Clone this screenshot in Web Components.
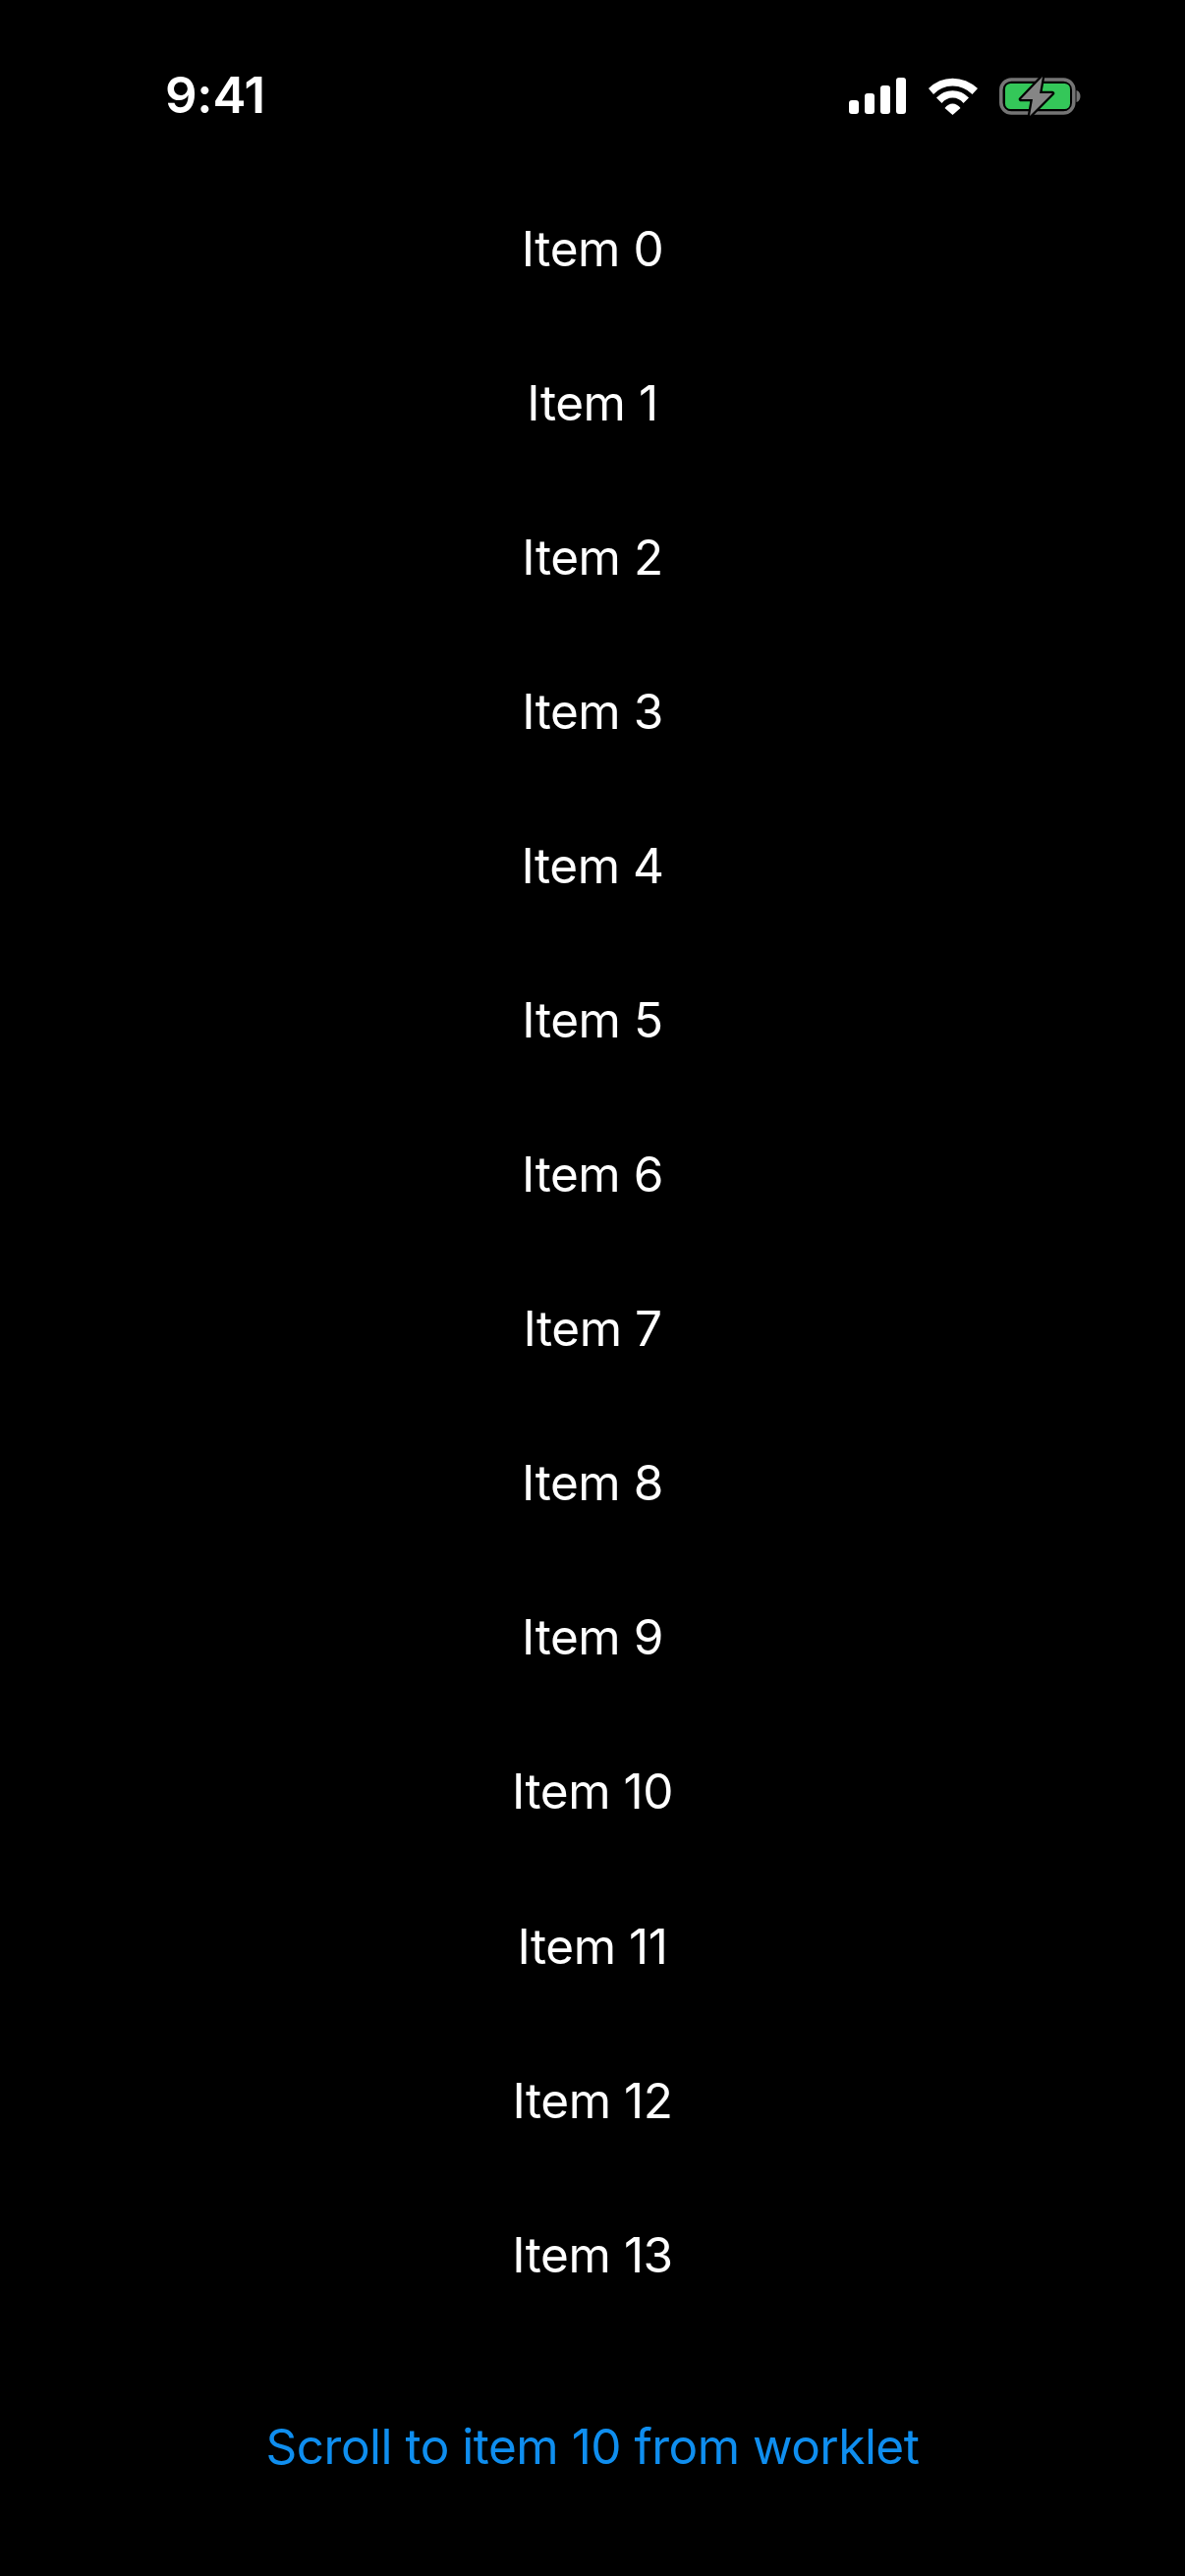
<!DOCTYPE html>
<html><head><meta charset="utf-8"><style>
html,body{margin:0;background:#000;}
body{width:1206px;height:2622px;overflow:hidden;font-family:Inter,"Liberation Sans",sans-serif;}
demo-screen{display:flex;}
</style></head><body>
<template id="t-screen"><style>
:host{display:flex;flex-direction:column;width:1206px;height:2622px;background:#000;}
.list{display:flex;flex-direction:column;padding-top:45px;}
.foot{display:flex;justify-content:center;padding-top:77px;}
</style><status-bar></status-bar><div class="list"><slot></slot></div><div class="foot"><slot name="action"></slot></div></template>
<template id="t-status"><style>
:host{display:flex;align-items:center;justify-content:space-between;padding:65px 0 0 168px;width:932px;height:64px;}
.time{font:600 51px Inter,"Liberation Sans",sans-serif;color:#fff;line-height:64px;letter-spacing:-.25px;}
.icons{display:flex;align-items:center;gap:22px;margin-top:1px;}
.icons svg+svg+svg{margin-left:-1px}
svg{display:block}
</style><span class="time">9:41</span><div class="icons">
<svg width="58" height="37" viewBox="0 0 58 37"><rect x="0" y="23" width="10" height="14" rx="3" fill="#fff"/><rect x="16" y="16" width="10" height="21" rx="3" fill="#fff"/><rect x="32" y="8" width="10" height="29" rx="3" fill="#fff"/><rect x="48" y="0" width="10" height="37" rx="3" fill="#fff"/></svg>
<svg width="52" height="38" viewBox="0 0 52 38"><path d="M1 11Q11.500 .7 25.500 .7T51 11L45.500 17Q37 8.500 25.500 8.500T6 17Z" fill="#fff"/><path d="M9 20.500Q16 13.200 25.500 13.200T42 20.500L36.500 26Q32 20.500 25.500 20.500T14.500 26Z" fill="#fff"/><path d="M17.500 31Q21 26.500 25.500 26.500T33.500 31L25.500 38Z" fill="#fff"/></svg>
<svg width="83" height="42" viewBox="0 0 83 42"><rect x="1.800" y="4" width="74" height="34" rx="10.500" fill="none" stroke="#757575" stroke-width="3.500"/><rect x="6" y="8" width="66" height="26" rx="5.500" fill="#34c759"/><path d="M78.500 15c2.700 .8 4 3 4 6s-1.300 5.200-4 6Z" fill="#757575"/><path d="M44 1 L22 24 H34 L31 41 L54 18 H41 Z" fill="#858585" stroke="#000" stroke-width="4.500" stroke-linejoin="round" paint-order="stroke"/></svg>
</div></template>
<template id="t-item"><style>
:host{display:flex;align-items:center;justify-content:center;height:157.1px;color:#fff;font:400 49.500px Inter,"Liberation Sans",sans-serif;letter-spacing:-.45px;}
</style><slot></slot></template>
<template id="t-link"><style>
:host{display:block;color:#0f8eef;font:400 49.500px Inter,"Liberation Sans",sans-serif;letter-spacing:-.5px;line-height:80px;}
</style><slot></slot></template>
<demo-screen>
<list-item>Item 0</list-item><list-item>Item 1</list-item><list-item>Item 2</list-item><list-item>Item 3</list-item><list-item>Item 4</list-item><list-item>Item 5</list-item><list-item>Item 6</list-item><list-item>Item 7</list-item><list-item>Item 8</list-item><list-item>Item 9</list-item><list-item>Item 10</list-item><list-item>Item 11</list-item><list-item>Item 12</list-item><list-item>Item 13</list-item>
<action-link slot="action">Scroll to item 10 from worklet</action-link>
</demo-screen>
<script>
const def=(n,t)=>customElements.define(n,class extends HTMLElement{constructor(){super();this.attachShadow({mode:'open'}).appendChild(document.getElementById(t).content.cloneNode(true));}});
def('status-bar','t-status');def('list-item','t-item');def('action-link','t-link');def('demo-screen','t-screen');
</script></body></html>
